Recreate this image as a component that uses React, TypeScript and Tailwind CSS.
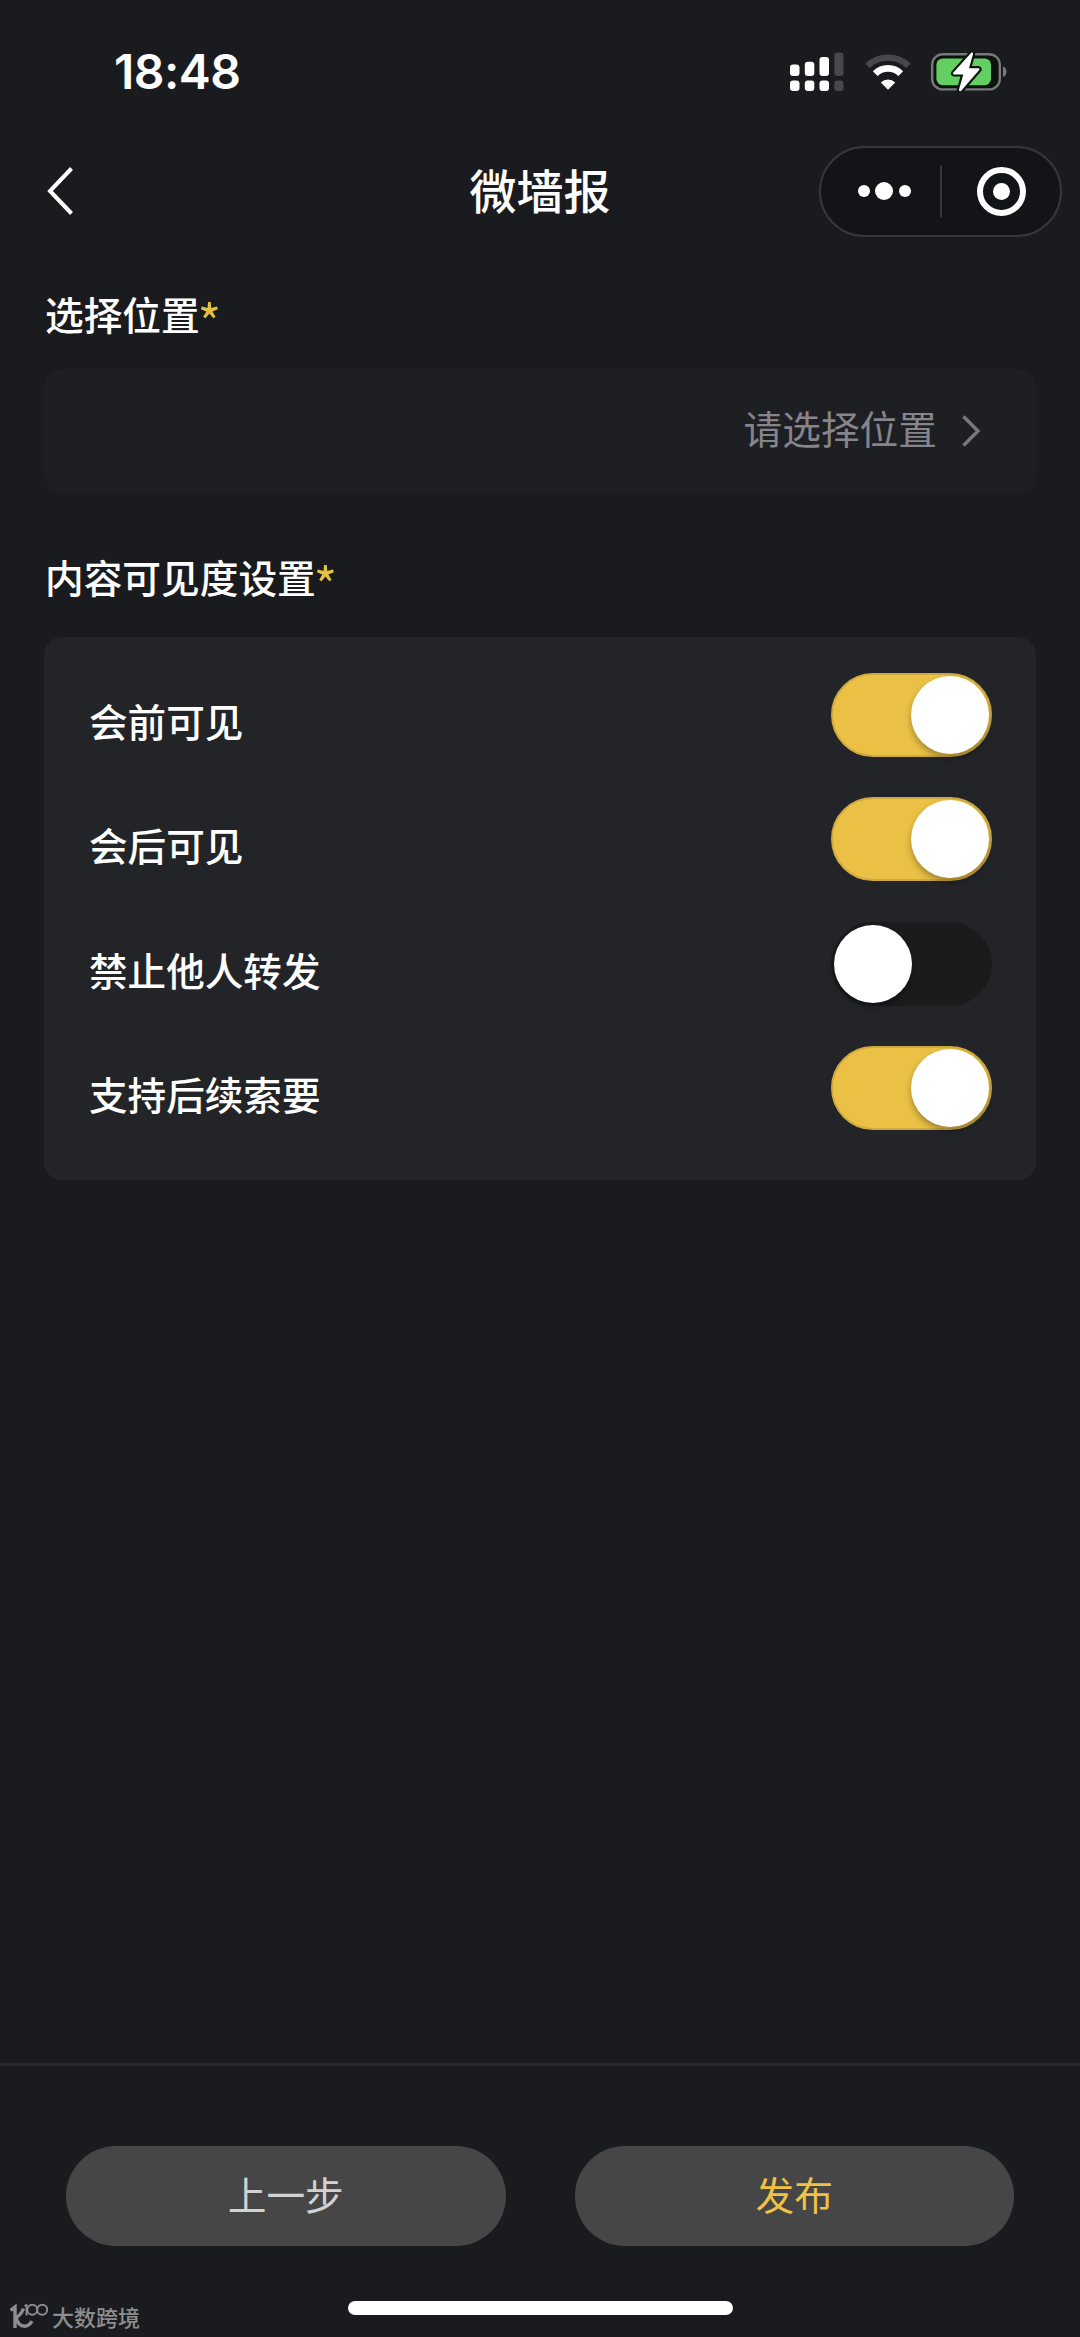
import { useState } from "react";

const CellularIcon = () => (
    <svg width="56" height="40" viewBox="0 0 56 40" fill="#fff">
        <rect x="1" y="12.5" width="9.5" height="11.5" rx="3" />
        <rect x="15.8" y="9.8" width="9.5" height="14.2" rx="3" />
        <rect x="30.5" y="5" width="9.5" height="19" rx="3" />
        <rect x="45.3" y="0.5" width="9.2" height="23.5" rx="3.2" fill="#47484c" />
        <rect x="1" y="28.5" width="9.5" height="10.5" rx="3" />
        <rect x="15.8" y="28.5" width="9.5" height="10.5" rx="3" />
        <rect x="30.5" y="28.5" width="9.5" height="10.5" rx="3" />
        <rect x="45.3" y="28.5" width="9.2" height="10.5" rx="3.2" fill="#47484c" />
    </svg>
);

const WifiIcon = () => (
    <svg width="46" height="37" viewBox="0 0 46 37" fill="none">
        <path d="M2.6 11.8a29.5 29.5 0 0 1 40.8 0" stroke="#47484c" strokeWidth="6.4" />
        <path d="M10.2 19.6a18.4 18.4 0 0 1 25.6 0" stroke="#fff" strokeWidth="6.8" />
        <path d="M23 35.8l-7.2-7.2a10.2 10.2 0 0 1 14.4 0z" fill="#fff" />
    </svg>
);

const BatteryIcon = () => (
    <svg width="77" height="40" viewBox="0 0 77 40">
        <rect x="1.2" y="2.2" width="67.6" height="35.2" rx="10.5" fill="#0c130e" stroke="#77787c" strokeWidth="2.4" />
        <rect x="5.4" y="6.4" width="54.6" height="26.8" rx="6.4" fill="#62cf62" />
        <path d="M72 14.6c4.6 1.6 4.6 8.9 0 10.5z" fill="#77787c" />
        <path
            d="M40 1 22.4 20.6c-.7.8-.3 1.8.7 1.8h9.2L28 37.6c-.4 1.4 1.2 2.2 2.2 1.1L48.2 18c.7-.8.3-1.8-.8-1.8H38L42 2.2C42.4.8 41 0 40 1z"
            fill="#fff"
            stroke="#0d150f"
            strokeWidth="4.4"
            paintOrder="stroke"
        />
    </svg>
);

const StatusBar = () => (
    <div className="flex h-[144px] items-center justify-between pl-[114px] pr-[72px]">
        <span className="font-['Inter'] text-[48px] font-semibold leading-none tracking-[-0.5px]">18:48</span>
        <div className="flex items-center gap-[20px]">
            <CellularIcon />
            <WifiIcon />
            <BatteryIcon />
        </div>
    </div>
);

const NavBar = () => (
    <div className="grid h-[94px] grid-cols-[1fr_auto_1fr] items-center">
        <svg className="ml-[46px]" width="28" height="50" viewBox="0 0 28 50" fill="none" stroke="#fff" strokeWidth="4">
            <path d="M25.5 2.5 4 25l21.5 22.5" />
        </svg>
        <h1 className="pb-[6px] text-[47px] font-medium leading-none">微墙报</h1>
        <div className="mr-[18px] flex h-[91px] w-[243px] items-center justify-self-end rounded-full border-2 border-[#36373a] bg-[#131417]">
            <div className="flex w-[119px] items-center justify-center gap-[5.5px] pl-[7px]">
                <span className="size-[12px] rounded-full bg-white" />
                <span className="size-[18px] rounded-full bg-white" />
                <span className="size-[12px] rounded-full bg-white" />
            </div>
            <span className="h-[52px] w-[2px] bg-[#36373a]" />
            <div className="flex flex-1 items-center justify-center">
                <span className="flex size-[49px] items-center justify-center rounded-full border-[6px] border-white">
                    <span className="size-[17px] rounded-full bg-white" />
                </span>
            </div>
        </div>
    </div>
);

const SectionLabel = ({ text }: { text: string }) => (
    <h2 className="pl-px text-[38.7px] font-medium leading-[56px]">
        {text}
        <span className="-ml-[2px] align-[-12px] text-[50px] font-normal leading-[0] text-[#e6c043]">*</span>
    </h2>
);

type ToggleProps = { checked: boolean; onChange: () => void };

const Toggle = ({ checked, onChange }: ToggleProps) => (
    <button
        type="button"
        role="switch"
        aria-checked={checked}
        onClick={onChange}
        className={`flex h-[84px] w-[161px] items-center rounded-full ${
            checked ? "justify-end border-2 border-[#d0a93f] bg-[#eac045] pr-px" : "justify-start bg-[#1a1b1d] pl-[3px]"
        }`}
    >
        <span className="size-[78px] rounded-full bg-white shadow-[0_4px_6px_rgba(0,0,0,0.3)]" />
    </button>
);

const initialSettings = [
    { label: "会前可见", checked: true },
    { label: "会后可见", checked: true },
    { label: "禁止他人转发", checked: false },
    { label: "支持后续索要", checked: true },
];

const App = () => {
    const [settings, setSettings] = useState(initialSettings);

    const toggle = (index: number) => {
        setSettings(settings.map((s, i) => (i === index ? { ...s, checked: !s.checked } : s)));
    };

    return (
        <div className="flex h-[2337px] w-[1080px] flex-col overflow-hidden bg-[#1a1b1e] font-['Noto_Sans_CJK_SC',sans-serif] text-white">
            <StatusBar />
            <NavBar />

            <main className="flex-1 px-[44px] pt-[47px]">
                <SectionLabel text="选择位置" />
                <button
                    type="button"
                    className="mt-[28px] flex h-[124px] w-full items-center justify-end rounded-[18px] bg-[#1e1f23] pr-[55px] text-[38.7px] text-[#85858b]"
                >
                    <span className="pb-[7px]">请选择位置</span>
                    <svg className="ml-[24px]" width="20" height="34" viewBox="0 0 20 34" fill="none" stroke="#77777d" strokeWidth="3.4">
                        <path d="M2.5 2.5 17 17 2.5 31.5" />
                    </svg>
                </button>

                <div className="mt-[55px]">
                    <SectionLabel text="内容可见度设置" />
                </div>
                <div className="mt-[33px] flex h-[543px] flex-col rounded-[18px] bg-[#232428] pl-[45px] pr-[44px] pt-[35.5px]">
                    {settings.map((s, i) => (
                        <div key={s.label} className="flex h-[124.6px] items-start justify-between">
                            <span className="pt-[19px] text-[38.6px] font-medium leading-[56px]">{s.label}</span>
                            <Toggle checked={s.checked} onChange={() => toggle(i)} />
                        </div>
                    ))}
                </div>
            </main>

            <footer className="h-[274px] border-t-[3px] border-[#27282b]">
                <div className="flex gap-[69px] px-[66px] pt-[80px]">
                    <button type="button" className="h-[100px] flex-1 rounded-full bg-[#464646] pb-[5px] text-[38.7px] text-[#d2d2d2]">
                        上一步
                    </button>
                    <button type="button" className="h-[100px] flex-1 rounded-full bg-[#464646] pb-[5px] text-[38.7px] text-[#f0c243]">
                        发布
                    </button>
                </div>
                <div className="mt-[55px] flex items-start pl-[10px]">
                    {/* watermark */}
                    <div className="mt-[2px] flex w-[338px] items-start gap-[4px] text-[#8d8e90]">
                        <svg width="38" height="26" viewBox="0 0 38 26" fill="none" stroke="currentColor">
                            <path d="M0.5 7.5 5 4V25" strokeWidth="3.4" />
                            <path d="M13.5 5.5C12 9.5 9 13 6 14.5c1.5 6 4.5 8.7 8.5 8.7 3.2 0 5.5-1.700 7.500-5" strokeWidth="3.4" />
                            <path d="M14.500 3l2-1V12.500" strokeWidth="1.8" />
                            <circle cx="22.3" cy="6.7" r="5" strokeWidth="1.9" />
                            <circle cx="32.2" cy="6.7" r="5" strokeWidth="1.9" />
                        </svg>
                        <span className="text-[22px] font-medium leading-[26px]">大数跨境</span>
                    </div>
                    <div className="h-[14px] w-[385px] rounded-full bg-white" />
                </div>
            </footer>
        </div>
    );
};

export default App;
